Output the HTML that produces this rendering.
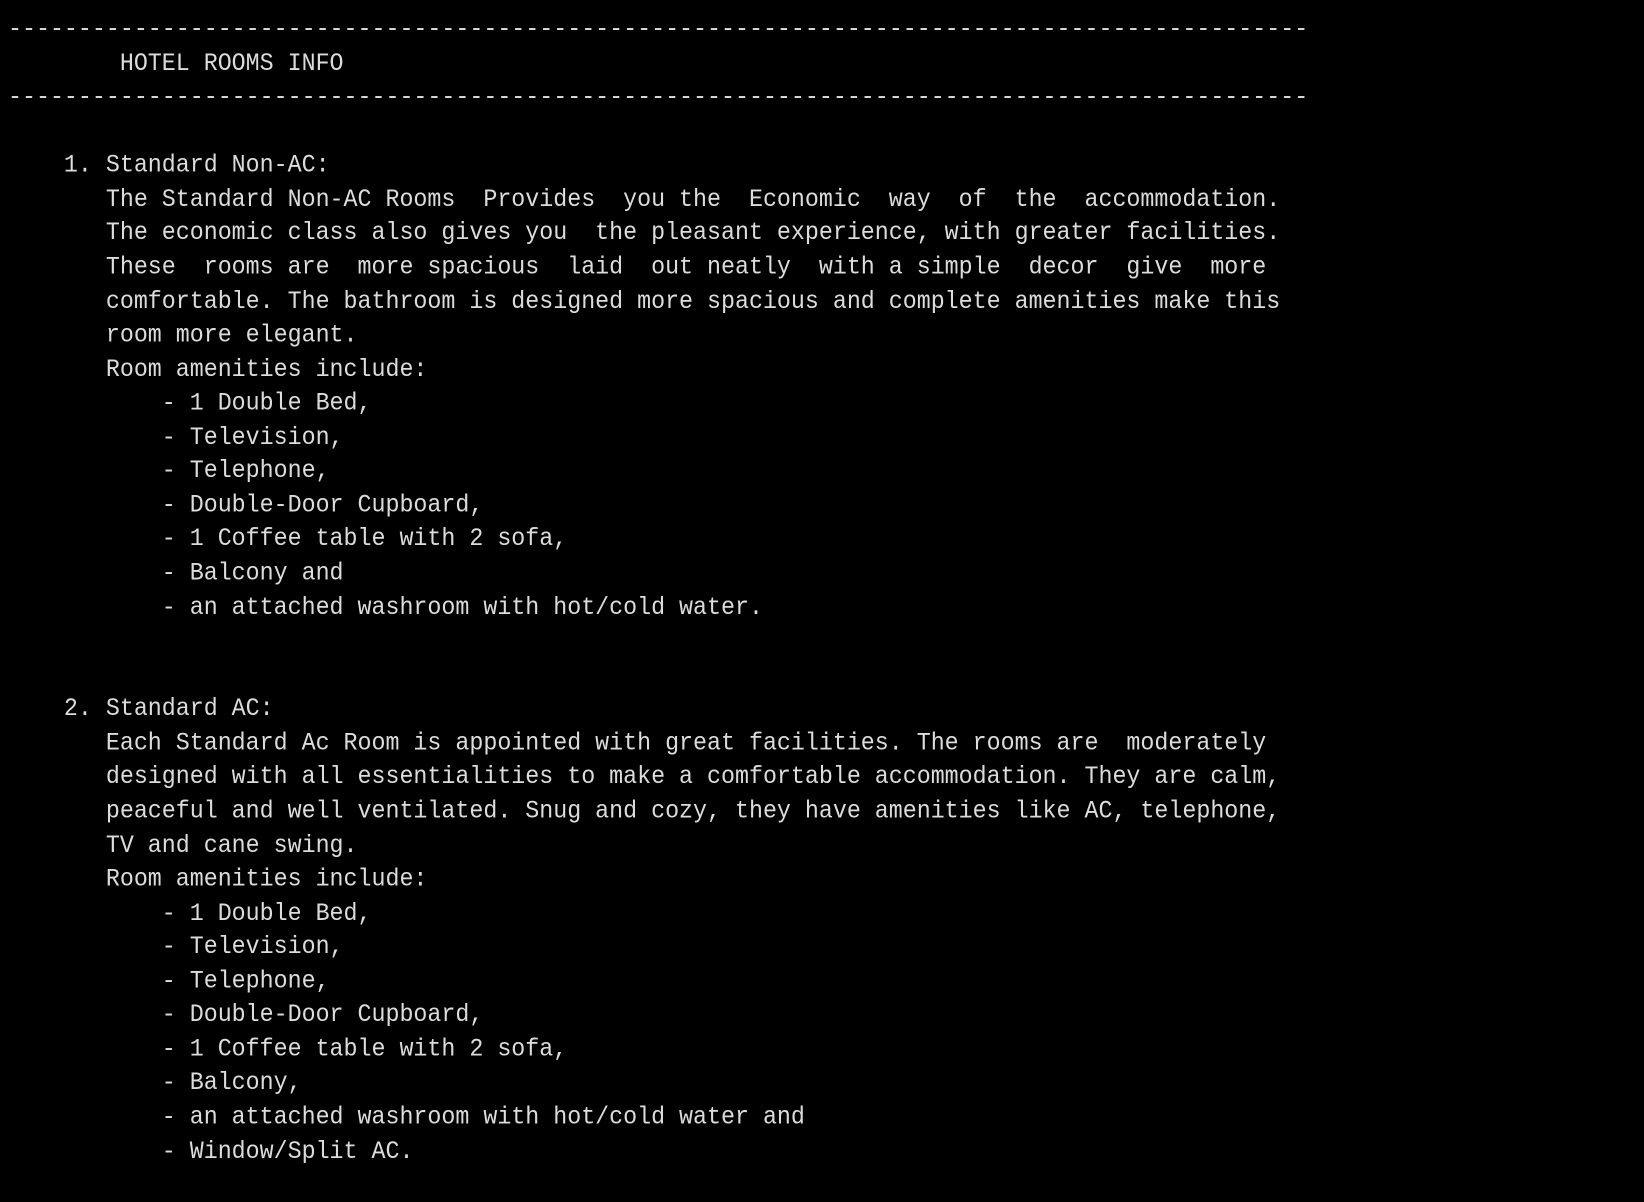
<!DOCTYPE html>
<html><head><meta charset="utf-8"><style>
html,body{margin:0;padding:0;background:#000;width:1644px;height:1202px;overflow:hidden}
pre{position:absolute;left:8px;top:13px;margin:0;font-family:"Liberation Mono",monospace;font-size:23.31px;line-height:31.57px;color:#dcdcdc;transform:scaleY(1.077);transform-origin:0 0;white-space:pre}
</style></head><body><pre>---------------------------------------------------------------------------------------------
        HOTEL ROOMS INFO
---------------------------------------------------------------------------------------------

    1. Standard Non-AC:
       The Standard Non-AC Rooms  Provides  you the  Economic  way  of  the  accommodation.
       The economic class also gives you  the pleasant experience, with greater facilities.
       These  rooms are  more spacious  laid  out neatly  with a simple  decor  give  more
       comfortable. The bathroom is designed more spacious and complete amenities make this
       room more elegant.
       Room amenities include:
           - 1 Double Bed,
           - Television,
           - Telephone,
           - Double-Door Cupboard,
           - 1 Coffee table with 2 sofa,
           - Balcony and
           - an attached washroom with hot/cold water.


    2. Standard AC:
       Each Standard Ac Room is appointed with great facilities. The rooms are  moderately
       designed with all essentialities to make a comfortable accommodation. They are calm,
       peaceful and well ventilated. Snug and cozy, they have amenities like AC, telephone,
       TV and cane swing.
       Room amenities include:
           - 1 Double Bed,
           - Television,
           - Telephone,
           - Double-Door Cupboard,
           - 1 Coffee table with 2 sofa,
           - Balcony,
           - an attached washroom with hot/cold water and
           - Window/Split AC.
</pre></body></html>
